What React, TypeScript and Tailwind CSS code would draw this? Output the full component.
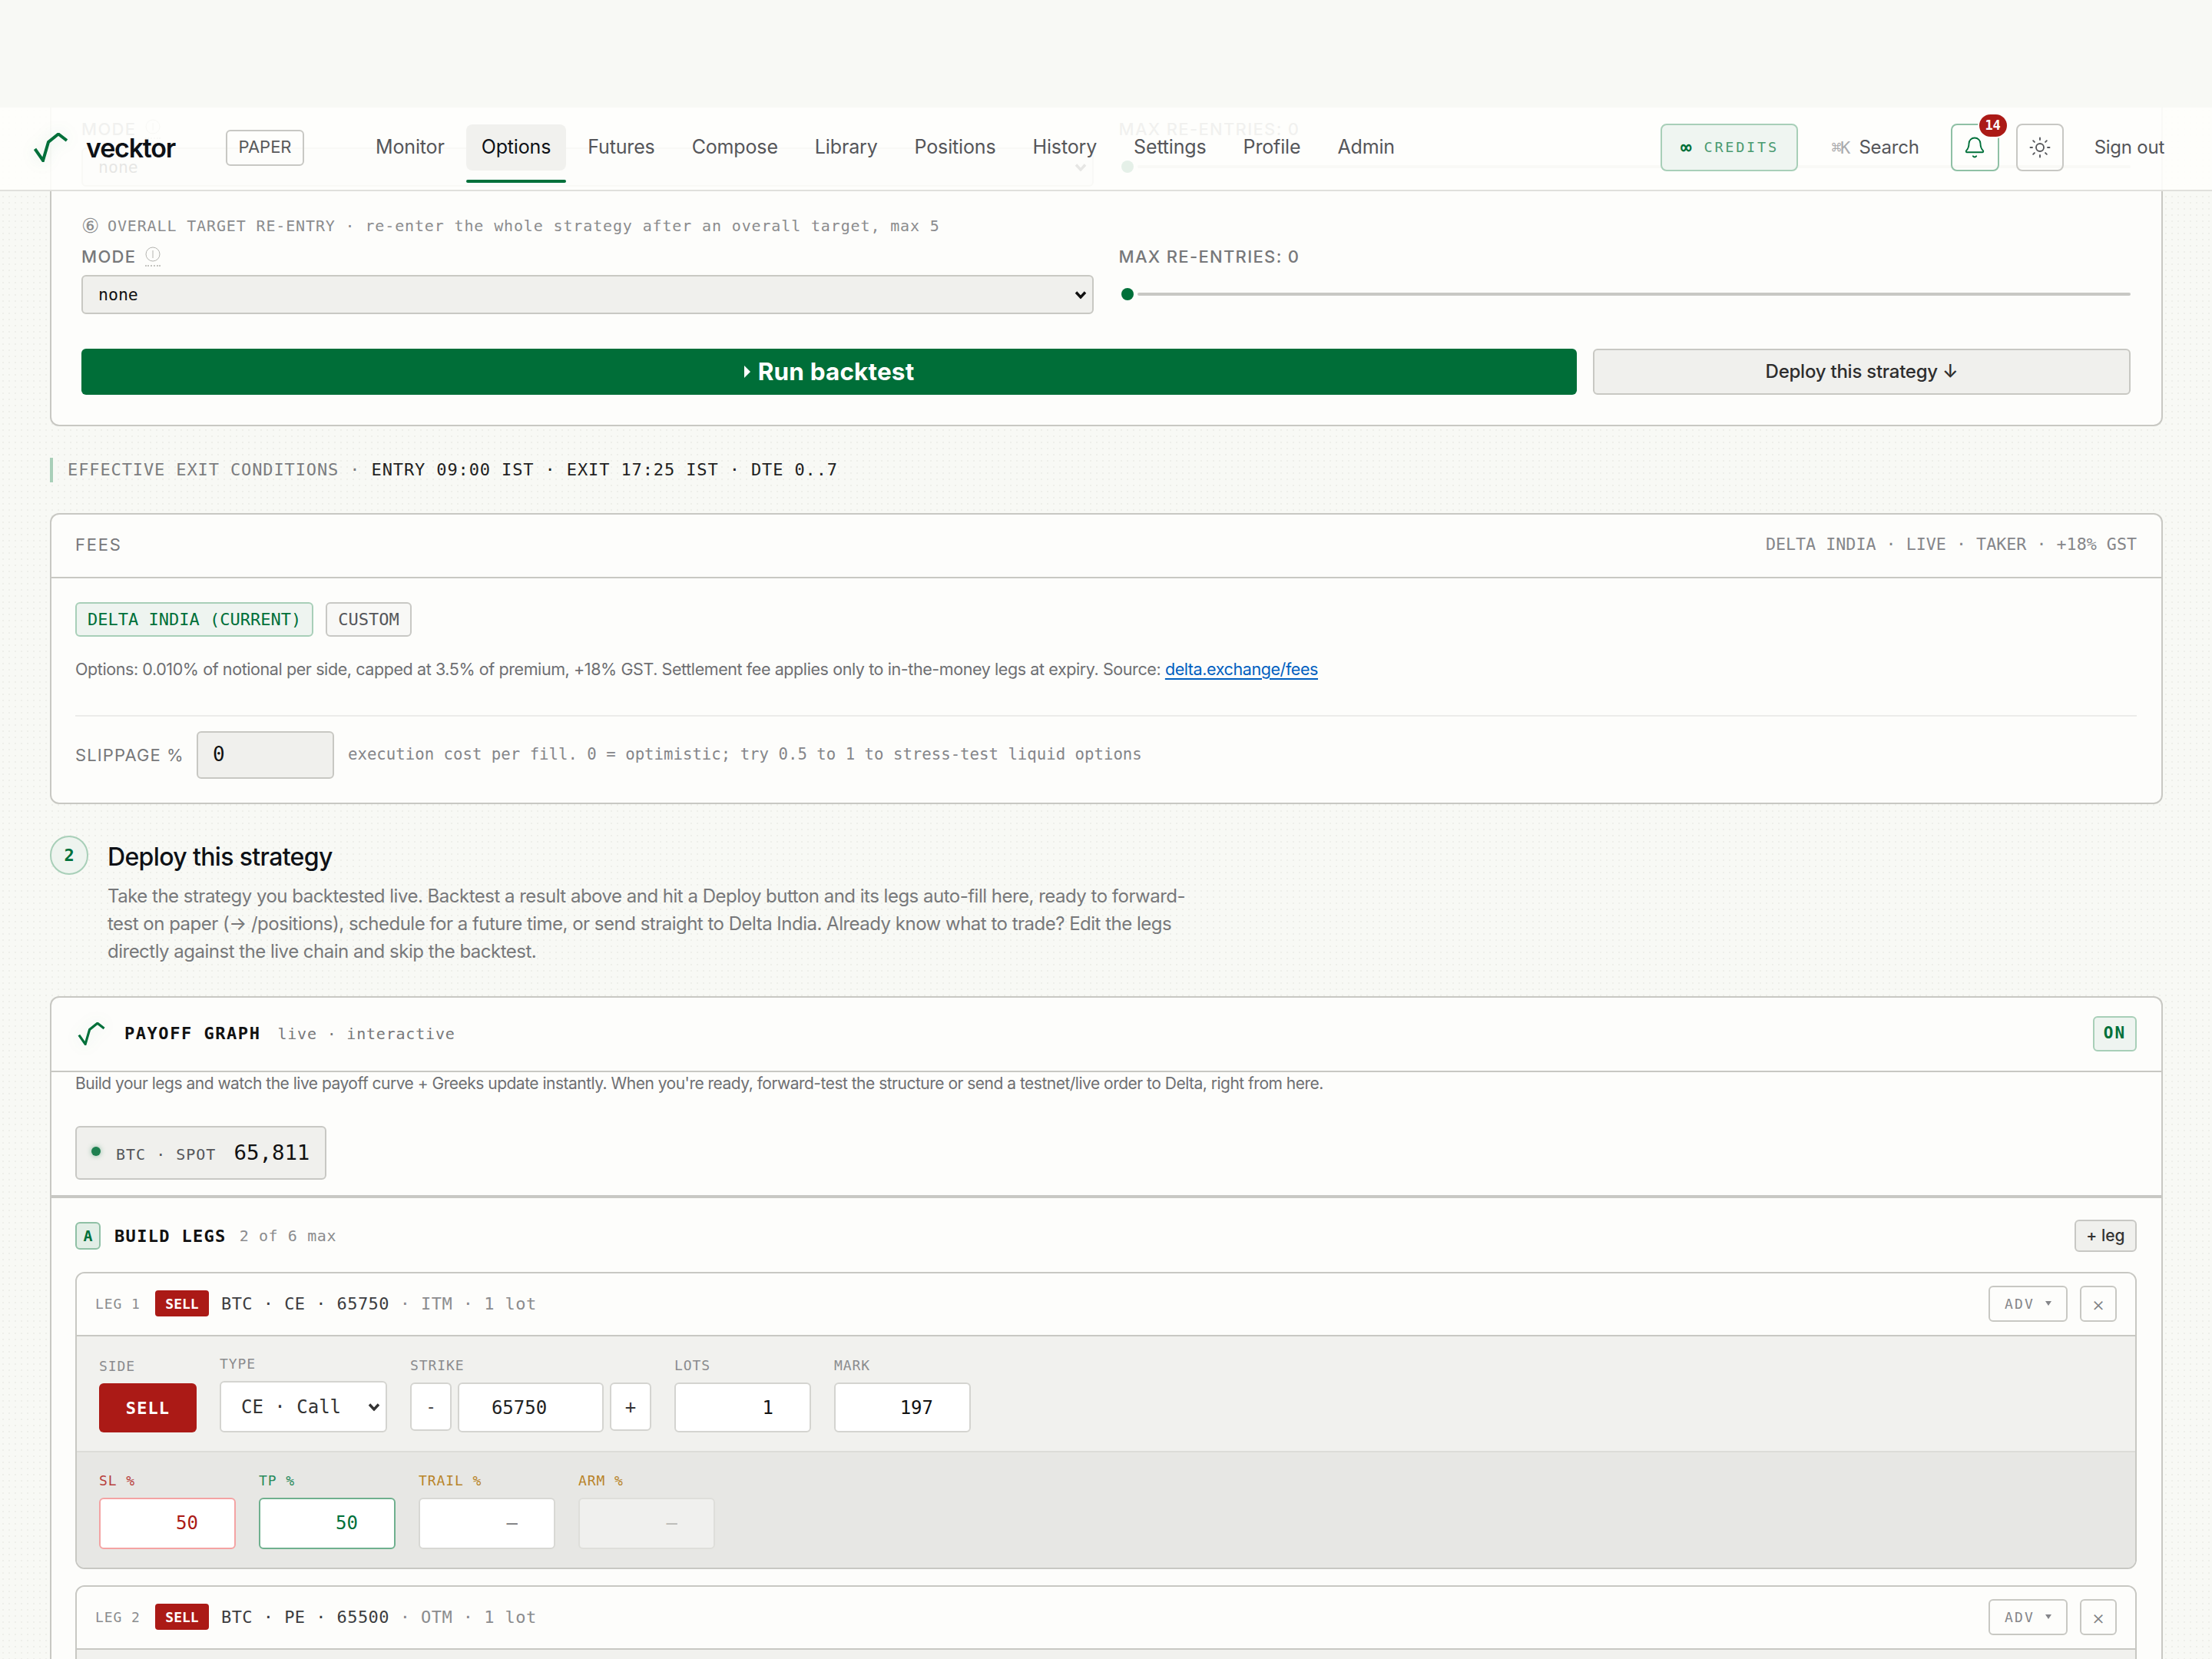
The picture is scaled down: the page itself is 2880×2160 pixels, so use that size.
import { Bell, Sun } from "lucide-react"

const mono = "font-['DejaVu_Sans_Mono',monospace]"

function Logo({ className }: { className: string }) {
  return (
    <svg viewBox="0 0 44 38" fill="none" className={className}>
      <path d="M1.5 21 L12 36 L19 12 L32 1.5 L43 10" stroke="#00703a" strokeWidth="4" />
    </svg>
  )
}

function InfoMark() {
  return (
    <span className="inline-flex border-b-2 border-dotted border-[#c4c4c0] pb-1">
      <svg viewBox="0 0 20 20" className="h-5 w-5" fill="none" stroke="#b4b4b0" strokeWidth="1">
        <circle cx="10" cy="10" r="9" />
        <path d="M10 5v10" />
      </svg>
    </span>
  )
}

// native arrow is too small at this scale, so the caret is drawn over the select
function Select({ value, className, caretColor }: { value: string; className: string; caretColor: string }) {
  return (
    <div className="relative">
      <select defaultValue={value} className={`${mono} w-full appearance-none rounded-md border-2 ${className}`}>
        <option>{value}</option>
      </select>
      <svg viewBox="0 0 16 11" fill="none" className="pointer-events-none absolute right-[9px] top-1/2 h-[11px] w-[16px] -translate-y-1/2">
        <path d="M2 2l6 6.5L14 2" stroke={caretColor} strokeWidth="3.4" />
      </svg>
    </div>
  )
}

function ModeRow() {
  return (
    <div className="grid grid-cols-2 gap-[33px]">
      <div>
        <div className="mb-[10px] flex h-[28px] items-center gap-[12px] text-[22px] font-medium tracking-[0.06em] text-[#77787a]">
          MODE <InfoMark />
        </div>
        <Select value="none" caretColor="#111" className="h-[51px] border-[#c8c8c3] bg-[#f0f0ed] pl-[20px] pr-8 pt-[2px] text-[21.5px] text-[#111]" />
      </div>
      <div>
        <div className="mb-[10px] flex h-[28px] items-center text-[22px] font-medium tracking-[0.06em] text-[#77787a]">
          MAX RE-ENTRIES: 0
        </div>
        <div className="flex h-[49px] items-center pl-[3px]">
          <div className="h-4 w-4 rounded-full bg-[#00703a]" />
          <div className="ml-[5px] h-1 flex-1 rounded-full bg-[#c8c8c4]" />
        </div>
      </div>
    </div>
  )
}

function Field({ label, labelColor, children }: { label: string; labelColor: string; children: React.ReactNode }) {
  return (
    <div className="flex flex-col gap-[12px]">
      <div className={`${mono} h-[20px] text-[18px] leading-[20px] tracking-[0.05em] ${labelColor}`}>{label}</div>
      {children}
    </div>
  )
}

function NumInput({ value, className }: { value: string; className: string }) {
  return (
    <input
      readOnly
      value={value}
      className={`${mono} w-[178px] rounded-md border-2 bg-white pr-[47px] text-right text-[24px] outline-none ${className}`}
    />
  )
}

function Leg({ n, type, typeLabel, strike, moneyness, top }: { n: number; type: string; typeLabel: string; strike: string; moneyness: string; top: string }) {
  return (
    <div className={`${top} overflow-hidden rounded-xl border-2 border-[#c8c8c3]`}>
      <div className="flex h-[82px] items-center justify-between border-b-2 border-[#c8c8c3] bg-[#fdfdfb] pb-[2px] pl-[24px] pr-[24px]">
        <div className={`${mono} flex items-center`}>
          <span className="w-[78px] text-[18px] tracking-[0.05em] text-[#8b8c8e]">LEG {n}</span>
          <span className="flex h-[34px] w-[70px] items-center justify-center rounded bg-[#ab1a16] text-[18px] font-bold text-white">SELL</span>
          <span className="ml-[16px] text-[22px] tracking-[0.02em] text-[#3c3d40]">
            BTC · {type} · {strike}
            <span className="text-[#8b8c8e]"> · {moneyness} · 1 lot</span>
          </span>
        </div>
        <div className="flex items-center gap-[16px]">
          <button className={`${mono} flex h-[47px] w-[103px] items-center justify-center gap-[14px] rounded-md border-2 border-[#c8c8c3] text-[18px] tracking-[0.12em] text-[#85868a]`}>
            ADV
            <svg viewBox="0 0 8 6" className="h-[6px] w-[8px]" fill="#85868a"><path d="M0 0h8L4 6z" /></svg>
          </button>
          <button className="flex h-[47px] w-[48px] items-center justify-center rounded-md border-2 border-[#c8c8c3] text-[26px] font-light text-[#808184]">×</button>
        </div>
      </div>
      <div className="flex h-[151px] items-end gap-[30px] border-b-2 border-[#dcdcd8] bg-[#f1f1ee] pb-[24px] pl-[29px]">
        <Field label="SIDE" labelColor="text-[#8b8c8e]">
          <button className={`${mono} h-[64px] w-[127px] rounded-md bg-[#ab1a16] text-[22px] font-bold tracking-[0.05em] text-white`}>SELL</button>
        </Field>
        <Field label="TYPE" labelColor="text-[#8b8c8e]">
          <div className="w-[218px]">
            <Select value={typeLabel} caretColor="#333" className="h-[67px] border-[#d4d4d0] bg-white pl-[26px] pr-8 text-[24px] text-[#333]" />
          </div>
        </Field>
        <Field label="STRIKE" labelColor="text-[#8b8c8e]">
          <div className="flex items-start gap-[8px]">
            <button className={`${mono} h-[63px] w-[54px] rounded-md border-2 border-[#d4d4d0] bg-white text-[22px] text-[#333]`}>-</button>
            <input readOnly value={strike} className={`${mono} h-[65px] w-[190px] rounded-md border-2 border-[#d4d4d0] bg-white pr-[30px] text-center text-[24px] text-[#222] outline-none`} />
            <button className={`${mono} h-[63px] w-[54px] rounded-md border-2 border-[#d4d4d0] bg-white text-[24px] text-[#333]`}>+</button>
          </div>
        </Field>
        <Field label="LOTS" labelColor="text-[#8b8c8e]">
          <NumInput value="1" className="h-[65px] border-[#d4d4d0] text-[#111]" />
        </Field>
        <Field label="MARK" labelColor="text-[#8b8c8e]">
          <NumInput value="197" className="h-[65px] border-[#d4d4d0] text-[#111]" />
        </Field>
      </div>
      <div className="flex gap-[30px] bg-[#e7e7e4] pb-[24px] pl-[29px] pt-[27px]">
        <Field label="SL %" labelColor="text-[#b8403c]">
          <NumInput value="50" className="h-[67px] border-[#f4a3a3] pb-[2px] text-[#ab1a16]" />
        </Field>
        <Field label="TP %" labelColor="text-[#2a8a5c]">
          <NumInput value="50" className="h-[67px] border-[#6fb08e] pb-[2px] text-[#00703a]" />
        </Field>
        <Field label="TRAIL %" labelColor="text-[#b88428]">
          <NumInput value="—" className="h-[67px] border-[#d8d8d4] pb-[2px] text-[#77787a]" />
        </Field>
        <Field label="ARM %" labelColor="text-[#b88428]">
          <input readOnly value="—" className={`${mono} h-[67px] w-[178px] rounded-md border-2 border-[#dedeDA] bg-[#f0f0ee] pb-[2px] pr-[47px] text-right text-[24px] text-[#b8b8b4] outline-none`} />
        </Field>
      </div>
    </div>
  )
}

const navLinks = ["Monitor", "Options", "Futures", "Compose", "Library", "Positions", "History", "Settings", "Profile", "Admin"]

function Nav() {
  return (
    <header className="absolute inset-x-0 top-0 z-10 flex h-[109px] items-center justify-between border-b-2 border-[#e0e0dc] bg-[#fefefc]/90 pb-[3px] pl-[44px] pr-[62px]">
      <div className="flex items-center">
        <Logo className="h-[38px] w-[44px] drop-shadow-[0_0_10px_rgba(0,112,58,0.15)]" />
        <span className="ml-[24px] w-[182px] text-[34px] font-semibold tracking-[-0.035em] text-[#0e1116]">vecktor</span>
        <span className="flex h-[47px] w-[102px] items-center justify-center rounded-md border-2 border-[#c8c8c4] pb-[2px] text-[22px] text-[#58595b]">PAPER</span>
        <nav className="ml-[73px] flex items-center gap-[8px]">
          {navLinks.map((l) => (
            <a key={l} className={`relative flex h-[60px] items-center rounded-lg px-[20px] text-[25px] tracking-[-0.006em] ${l === "Options" ? "bg-[#f1f1ee] text-[#0e1116]" : "text-[#55565a]"}`}>
              {l}
              {l === "Options" && <span className="absolute inset-x-0 -bottom-4 h-1 rounded-sm bg-[#00703a]" />}
            </a>
          ))}
        </nav>
      </div>
      <div className="flex items-center">
        <div className={`${mono} flex h-[62px] w-[179px] items-center justify-center gap-[16px] rounded-lg border-2 border-[#a8cfb8] bg-[#eef4f0]/95`}>
          <span className="text-[24px] font-bold leading-none text-[#00703a]">∞</span>
          <span className="text-[18.5px] tracking-[0.15em] text-[#4a9a70]">CREDITS</span>
        </div>
        <div className="ml-[43px] flex items-center gap-[13px]">
          <span className={`${mono} text-[22px] tracking-[-0.08em] text-[#aaabad]`}>⌘K</span>
          <span className="text-[24px] tracking-[-0.01em] text-[#55565a]">Search</span>
        </div>
        <button className="relative ml-[41px] flex h-[62px] w-[63px] items-center justify-center rounded-lg border-2 border-[#8fc0a5]">
          <Bell size={30} strokeWidth={1.5} color="#00703a" />
          <span className={`${mono} absolute -right-[12px] -top-[14px] flex h-[29px] w-[36px] items-center justify-center rounded-full bg-[#ab1a16] text-[17px] font-bold text-white ring-2 ring-[#fdfdfb]`}>14</span>
        </button>
        <button className="ml-[22px] flex h-[62px] w-[62px] items-center justify-center rounded-lg border-2 border-[#c8c8c4]">
          <Sun size={30} strokeWidth={1.5} color="#55565a" />
        </button>
        <span className="ml-[40px] text-[24px] tracking-[-0.01em] text-[#55565a]">Sign out</span>
      </div>
    </header>
  )
}

export default function App() {
  return (
    <div className="h-[2160px] overflow-hidden bg-[#f8f9f5] font-['Inter',sans-serif]">
      <div className="h-[140px]" />
      <div className="relative h-[2020px] overflow-hidden bg-[radial-gradient(circle,#eeefea_1.5px,transparent_1.5px)] bg-[length:8px_8px]">
        <Nav />
        <main className="pl-[65px] pr-[64px]">
          {/* strategy card, scrolled so its top sits under the nav */}
          <section className="rounded-b-xl border-2 border-t-0 border-[#c8c8c3] bg-[#fdfdfb] pb-[39px] pl-[39px] pr-[40px] pt-[14px]">
            <ModeRow />
            <div className={`${mono} mb-[12px] mt-[37px] flex h-[28px] items-center text-[20px] tracking-[0.043em] text-[#8b8c8e]`}>
              <span className="w-[34px] text-[26px] leading-none">⑥</span>
              OVERALL TARGET RE-ENTRY · re-enter the whole strategy after an overall target, max 5
            </div>
            <ModeRow />
            <div className="mt-[45px] flex gap-[21px]">
              <button className="flex h-[60px] flex-1 items-center justify-center gap-[10px] rounded-md bg-[#006e38] text-[31.5px] font-bold tracking-[0.005em] text-white">
                <svg viewBox="0 0 8 16" className="h-4 w-2" fill="white"><path d="M0 0l8 8-8 8z" /></svg>
                Run backtest
              </button>
              <button className="h-[60px] w-[700px] rounded-md border-2 border-[#c8c8c3] bg-[#f0f0ed] text-[24px] font-medium tracking-[-0.01em] text-[#2d2d2d]">
                Deploy this strategy ↓
              </button>
            </div>
          </section>

          <div className={`${mono} mt-[41px] flex h-[32px] items-center border-l-4 border-[#a8cfb8] pb-[2px] pl-[19px] text-[22px] tracking-[0.04em] text-[#222]`}>
            <span className="text-[#7c7d80]">EFFECTIVE EXIT CONDITIONS ·&nbsp;</span>ENTRY 09:00 IST · EXIT 17:25 IST · DTE 0..7
          </div>

          <section className="mt-[40px] rounded-xl border-2 border-[#c8c8c3] bg-[#fdfdfb]">
            <div className="flex h-[83px] items-center justify-between border-b-2 border-[#c8c8c3] pb-[2px] pl-[31px] pr-[32px]">
              <span className="text-[22px] tracking-[0.08em] text-[#77787a]">FEES</span>
              <span className={`${mono} text-[21.7px] text-[#85868a]`}>DELTA INDIA · LIVE · TAKER · +18% GST</span>
            </div>
            <div className="pb-[31px] pl-[31px] pr-[32px] pt-[31px]">
              <div className={`${mono} flex gap-4 text-[22px]`}>
                <span className="flex h-[45px] items-center rounded-md border-2 border-[#a8cfb8] bg-[#eef4f0] px-[14px] text-[#00703a]">DELTA INDIA (CURRENT)</span>
                <span className="flex h-[45px] items-center rounded-md border-2 border-[#c8c8c4] bg-[#f8f8f6] px-[14px] text-[#55565a]">CUSTOM</span>
              </div>
              <p className="mt-[24px] text-[21.5px] leading-[36px] tracking-[-0.019em] text-[#6e6f72]">
                Options: 0.010% of notional per side, capped at 3.5% of premium, +18% GST. Settlement fee applies only to in-the-money legs at expiry. Source:{" "}
                <a className="text-[#0060c0] underline underline-offset-4">delta.exchange/fees</a>
              </p>
              <div className="mt-[42px] h-[2px] bg-[#ececea]" />
              <div className="mt-[19px] flex items-center">
                <span className="w-[158px] text-[22px] tracking-[0.05em] text-[#77787a]">SLIPPAGE %</span>
                <input readOnly value="0" className={`${mono} h-[62px] w-[179px] rounded-md border-2 border-[#c8c8c3] bg-[#f0f0ed] pb-[2px] pl-[19px] text-[26px] text-[#111] outline-none`} />
                <span className={`${mono} ml-[18px] text-[20.7px] text-[#85868a]`}>
                  execution cost per fill. 0 = optimistic; try 0.5 to 1 to stress-test liquid options
                </span>
              </div>
            </div>
          </section>

          <section className="mt-[41px] flex gap-[25px]">
            <div className={`${mono} flex h-[51px] w-[50px] shrink-0 items-center justify-center rounded-full border-2 border-[#a8cfb8] bg-[#eef4ef] text-[22px] font-bold text-[#00703a]`}>2</div>
            <div className="pt-[8px]">
              <h2 className="text-[32px] font-medium leading-[40px] tracking-[-0.02em] text-[#0e1116]">Deploy this strategy</h2>
              <p className="mt-[13px] text-[24px] leading-[36px] tracking-[-0.021em] text-[#77787a]">
                Take the strategy you backtested live. Backtest a result above and hit a Deploy button and its legs auto-fill here, ready to forward-
                <br />
                test on paper (→ /positions), schedule for a future time, or send straight to Delta India. Already know what to trade? Edit the legs
                <br />
                directly against the live chain and skip the backtest.
              </p>
            </div>
          </section>

          <section className="mt-[40px] rounded-t-xl border-2 border-b-0 border-[#c8c8c3] bg-[#fdfdfb]">
            <div className="flex h-[97px] items-center justify-between border-b-2 border-[#c8c8c3] pb-[2px] pl-[34px] pr-[32px]">
              <div className={`${mono} flex items-center`}>
                <Logo className="h-[30px] w-[36px] drop-shadow-[0_0_10px_rgba(0,112,58,0.12)]" />
                <span className="ml-[25px] text-[22px] font-bold tracking-[0.07em] text-[#111]">PAYOFF GRAPH</span>
                <span className="ml-[22px] text-[20px] tracking-[0.04em] text-[#77787a]">live · interactive</span>
              </div>
              <span className={`${mono} flex h-[46px] w-[57px] items-center justify-center rounded-md border-2 border-[#a8cfb8] bg-[#eef4f0] text-[21px] font-bold tracking-[0.1em] text-[#00703a]`}>ON</span>
            </div>
            <p className="pl-[31px] pr-[32px] text-[21px] leading-[30px] tracking-[-0.024em] text-[#6e6f72]">
              Build your legs and watch the live payoff curve + Greeks update instantly. When you're ready, forward-test the structure or send a testnet/live order to Delta, right from here.
            </p>
            <div className="pl-[31px] pr-[32px]">
              <div className={`${mono} mt-[40px] flex h-[70px] w-[327px] items-center rounded-md border-2 border-[#c8c8c4] bg-[#f0f0ed] pl-[19px]`}>
                <span className="h-3 w-3 -translate-y-[2px] rounded-full bg-[#1e8050] shadow-[0_0_6px_rgba(30,128,80,0.5)]" />
                <span className="ml-[20px] mt-[3px] text-[20px] tracking-[0.05em] text-[#55565a]">BTC · SPOT</span>
                <span className="ml-[23px] text-[27.4px] text-[#111]">65,811</span>
              </div>
            </div>
            <div className="mt-[20px] border-t-4 border-[#c8c8c4] pl-[31px] pr-[32px] pt-[28px]">
              <div className="flex h-[42px] items-center justify-between">
                <div className={`${mono} flex items-center`}>
                  <span className="flex h-[36px] w-[33px] items-center justify-center rounded-md border-2 border-[#8fc0a5] bg-[#e2eee6] text-[20px] font-bold text-[#00703a]">A</span>
                  <span className="ml-[18px] text-[22px] font-bold tracking-[0.06em] text-[#111]">BUILD LEGS</span>
                  <span className="ml-[17px] text-[20px] tracking-[0.03em] text-[#8b8c8e]">2 of 6 max</span>
                </div>
                <button className="h-[42px] w-[81px] rounded-md border-2 border-[#c8c8c4] bg-[#f0f0ed] text-[21px] font-medium text-[#333]">+ leg</button>
              </div>
              <Leg n={1} type="CE" typeLabel="CE · Call" strike="65750" moneyness="ITM" top="mt-[26px]" />
              <Leg n={2} type="PE" typeLabel="PE · Put" strike="65500" moneyness="OTM" top="mt-[21px]" />
            </div>
          </section>
        </main>
      </div>
    </div>
  )
}
